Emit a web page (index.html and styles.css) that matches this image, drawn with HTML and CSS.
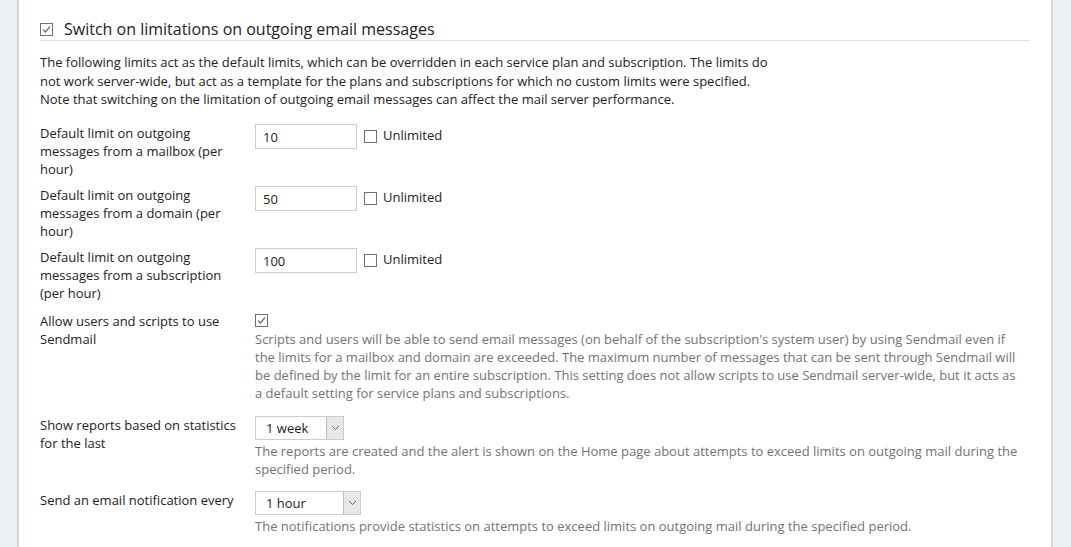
FILE: index.html
```html
<!DOCTYPE html>
<html lang="en">
<head>
<meta charset="utf-8">
<title>Outgoing mail limits</title>
<link rel="stylesheet" href="styles.css">
</head>
<body>
<div class="panel">
  <div class="section-head">
    <span class="cb"><svg viewBox="0 0 13 13" width="13" height="13"><rect x="0.5" y="0.5" width="12" height="12" fill="#fff" stroke="#6f6f6f"/><polyline points="3,6.5 5.5,9 10,3.5" fill="none" stroke="#6f6f6f" stroke-width="1.2"/></svg></span>
    <span class="section-title">Switch on limitations on outgoing email messages</span>
  </div>
  <p class="intro">The following limits act as the default limits, which can be overridden in each service plan and subscription. The limits do not work server-wide, but act as a template for the plans and subscriptions for which no custom limits were specified. Note that switching on the limitation of outgoing email messages can affect the mail server performance.</p>

  <div class="row">
    <div class="label">Default limit on outgoing messages from a mailbox (per hour)</div>
    <div class="field inline">
      <span class="input">10</span>
      <span class="cb"><svg viewBox="0 0 13 13" width="13" height="13"><rect x="0.5" y="0.5" width="12" height="12" fill="#fff" stroke="#6f6f6f"/></svg></span>
      <span class="cb-text">Unlimited</span>
    </div>
  </div>

  <div class="row">
    <div class="label">Default limit on outgoing messages from a domain (per hour)</div>
    <div class="field inline">
      <span class="input">50</span>
      <span class="cb"><svg viewBox="0 0 13 13" width="13" height="13"><rect x="0.5" y="0.5" width="12" height="12" fill="#fff" stroke="#6f6f6f"/></svg></span>
      <span class="cb-text">Unlimited</span>
    </div>
  </div>

  <div class="row">
    <div class="label">Default limit on outgoing messages from a subscription (per hour)</div>
    <div class="field inline">
      <span class="input">100</span>
      <span class="cb"><svg viewBox="0 0 13 13" width="13" height="13"><rect x="0.5" y="0.5" width="12" height="12" fill="#fff" stroke="#6f6f6f"/></svg></span>
      <span class="cb-text">Unlimited</span>
    </div>
  </div>

  <div class="row row-check">
    <div class="label">Allow users and scripts to use Sendmail</div>
    <div class="field">
      <div class="check-line"><span class="cb"><svg viewBox="0 0 13 13" width="13" height="13"><rect x="0.5" y="0.5" width="12" height="12" fill="#fff" stroke="#6f6f6f"/><polyline points="3,6.5 5.5,9 10,3.5" fill="none" stroke="#6f6f6f" stroke-width="1.2"/></svg></span></div>
      <div class="hint">Scripts and users will be able to send email messages (on behalf of the subscription's system user) by using Sendmail even if the limits for a mailbox and domain are exceeded. The maximum number of messages that can be sent through Sendmail will be defined by the limit for an entire subscription. This setting does not allow scripts to use Sendmail server-wide, but it acts as a default setting for service plans and subscriptions.</div>
    </div>
  </div>

  <div class="row row-select">
    <div class="label">Show reports based on statistics for the last</div>
    <div class="field">
      <div class="select select-week"><span class="select-text">1 week</span><span class="select-btn"><svg viewBox="0 0 9 6" width="9" height="6"><polyline points="1,1 4.5,4.5 8,1" fill="none" stroke="#666" stroke-width="1"/></svg></span></div>
      <div class="hint">The reports are created and the alert is shown on the Home page about attempts to exceed limits on outgoing mail during the specified period.</div>
    </div>
  </div>

  <div class="row row-select">
    <div class="label">Send an email notification every</div>
    <div class="field">
      <div class="select select-hour"><span class="select-text">1 hour</span><span class="select-btn"><svg viewBox="0 0 9 6" width="9" height="6"><polyline points="1,1 4.5,4.5 8,1" fill="none" stroke="#666" stroke-width="1"/></svg></span></div>
      <div class="hint">The notifications provide statistics on attempts to exceed limits on outgoing mail during the specified period.</div>
    </div>
  </div>
</div>
</body>
</html>
```

FILE: styles.css
```css
html, body {
  margin: 0;
  padding: 0;
}
body {
  background: #eceff4;
  padding: 0 18px 0 17px;
  font-family: "Open Sans", "Noto Sans", sans-serif;
  font-size: 13px;
  color: #222;
  height: 547px;
  overflow: hidden;
}
.panel {
  background: #fff;
  border-left: 2px solid #d3d6db;
  border-right: 2px solid #d3d6db;
  padding: 18px 21px 0 21px;
  min-height: 547px;
  box-sizing: border-box;
}
.section-head {
  display: flex;
  align-items: center;
  gap: 11px;
  height: 22px;
  border-bottom: 1px solid #e0e1e8;
}
.section-title {
  font-size: 16px;
  line-height: 22px;
  color: #222;
}
.cb {
  display: inline-flex;
  width: 13px;
  height: 13px;
  flex: none;
}
.cb svg {
  display: block;
}
.intro {
  margin: 12px 0 15px 0;
  max-width: 735px;
  line-height: 18.5px;
}
.row {
  display: flex;
  margin-bottom: 8px;
}
.row-check {
  margin-top: 10px;
  margin-bottom: 14px;
}
.row-select {
  margin-bottom: 13px;
}
.label {
  width: 205px;
  margin-right: 10px;
  line-height: 18px;
  flex: none;
}
.field {
  flex: 1;
  max-width: 766px;
  line-height: 18px;
}
.field.inline {
  display: flex;
  align-items: flex-start;
}
.input {
  display: block;
  width: 102px;
  height: 25px;
  box-sizing: border-box;
  border: 1px solid #c9ced4;
  padding: 0 7px;
  line-height: 24px;
}
.field.inline .cb {
  margin: 6px 0 0 7px;
}
.cb-text {
  margin-left: 6px;
  line-height: 20px;
  margin-top: 1px;
}
.check-line {
  height: 18px;
  display: flex;
  align-items: center;
}
.hint {
  color: #737373;
  line-height: 18px;
}
.select {
  display: flex;
  height: 24px;
  box-sizing: border-box;
  border: 1px solid #c9ced4;
  margin-bottom: 2px;
}
.select-week {
  width: 89px;
}
.select-hour {
  width: 106px;
}
.select-text {
  flex: 1;
  padding-left: 10px;
  line-height: 22px;
}
.select-btn {
  width: 16px;
  background: #e8e8e8;
  border-left: 1px solid #bcbcbc;
  display: flex;
  align-items: center;
  justify-content: center;
}
```
